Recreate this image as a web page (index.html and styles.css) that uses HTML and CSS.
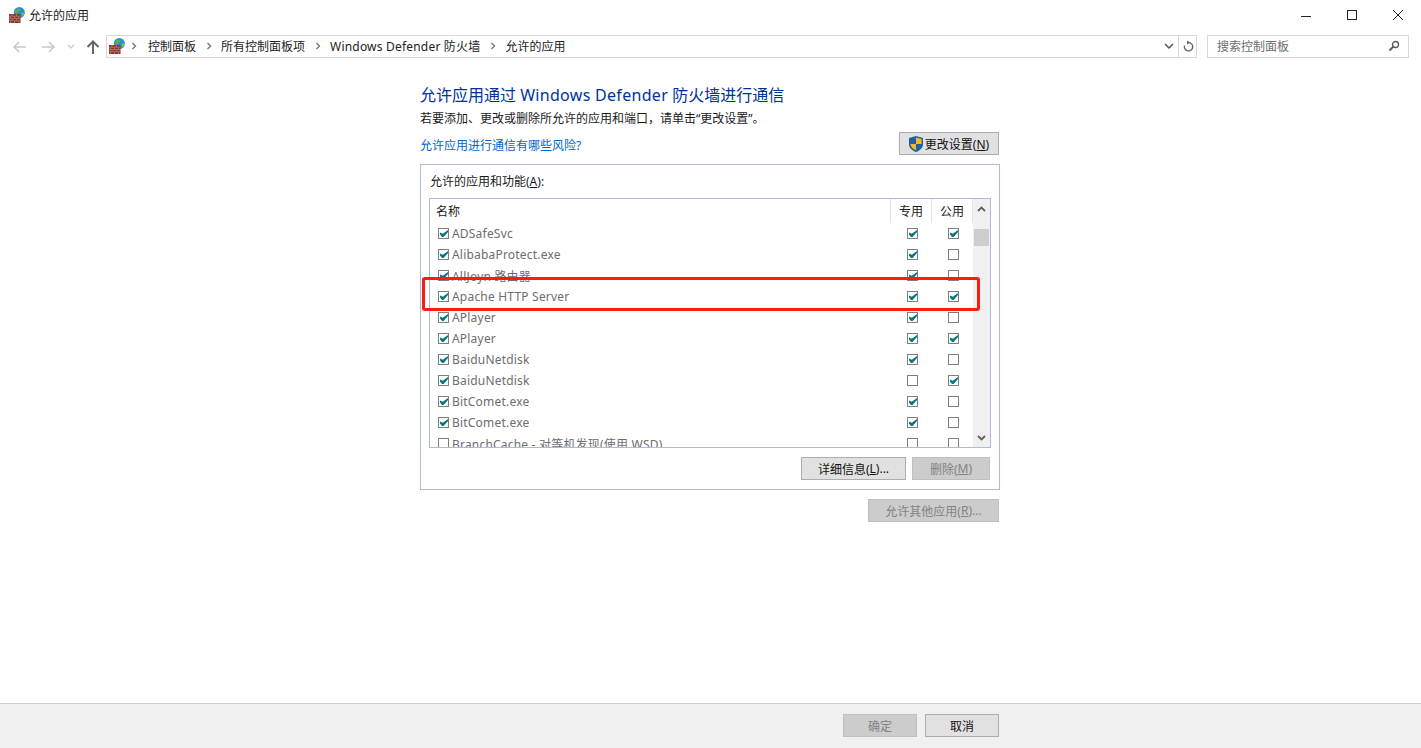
FILE: index.html
```html
<!DOCTYPE html>
<html lang="zh-CN">
<head>
  <meta charset="UTF-8" />
  <title>允许的应用</title>
  <link rel="stylesheet" href="styles.css">
</head>
<body>
  <svg class="defs" width="0" height="0">
    <symbol id="fw" viewBox="0 0 16 16">
      <circle cx="10.300" cy="5.500" r="5.500" fill="#2a8fd8"/>
      <path d="M7 2.500c2-1.500 4-1.300 5 0-.5 1.500-2 1-2.500 2.500S7.500 6 6.500 6C6 5 6.300 3.500 7 2.500z" fill="#5fb03c"/>
      <path d="M12.500 6c1-.4 2-.5 2.800-.2-.2 1.700-1 3-2.300 3.700z" fill="#7cc04a"/>
      <rect x="0" y="7" width="11.500" height="9" fill="#86352a"/>
      <path d="M0 9.200h11.500M0 11.500h11.500M0 13.700h11.500M3 7v2.200M7.500 7v2.200M1.500 9.200v2.300M5.500 9.200v2.300M9.500 9.200v2.300M3 11.500v2.200M7.500 11.500v2.200M1.500 13.700V16M5.500 13.700V16M9.500 13.700V16" stroke="#c08472" stroke-width=".7" fill="none"/>
    </symbol>
    <symbol id="crumb" viewBox="0 0 8 8">
      <path d="M2.500 1l3 3-3 3" stroke="#777" stroke-width="1.400" fill="none"/>
    </symbol>
  </svg>

  <div class="titlebar">
    <svg class="ico16"><use href="#fw"/></svg>
    <span class="title">允许的应用</span>
    <div class="winbtns">
      <span class="winbtn"><svg width="12" height="12"><path d="M1 7.500h10" stroke="#222"/></svg></span>
      <span class="winbtn"><svg width="12" height="12"><rect x="1.500" y="1.500" width="9" height="9" fill="none" stroke="#222"/></svg></span>
      <span class="winbtn"><svg width="12" height="12"><path d="M1 1l10 10M11 1L1 11" stroke="#222"/></svg></span>
    </div>
  </div>

  <div class="navbar">
    <div class="navbtns">
      <svg class="nav-back" width="14" height="12"><path d="M7 1L2 6l5 5M2 6h12" stroke="#c9c9c9" stroke-width="1.500" fill="none"/></svg>
      <svg class="nav-fwd" width="14" height="12"><path d="M7 1l5 5-5 5M12 6H0" stroke="#c9c9c9" stroke-width="1.500" fill="none"/></svg>
      <svg class="nav-down" width="8" height="6"><path d="M1 1l3 3 3-3" stroke="#c9c9c9" stroke-width="1.200" fill="none"/></svg>
      <svg class="nav-up" width="14" height="14"><path d="M1.500 7L7 1.500 12.500 7M7 2v12" stroke="#666" stroke-width="2" fill="none"/></svg>
    </div>
    <div class="address">
      <svg class="ico16"><use href="#fw"/></svg>
      <svg class="sep first"><use href="#crumb"/></svg>
      <span>控制面板</span>
      <svg class="sep"><use href="#crumb"/></svg>
      <span>所有控制面板项</span>
      <svg class="sep"><use href="#crumb"/></svg>
      <span class="crumb-wide">Windows Defender 防火墙</span>
      <svg class="sep"><use href="#crumb"/></svg>
      <span>允许的应用</span>
      <div class="addr-tools">
        <svg class="addr-drop" width="10" height="7"><path d="M1 1l4 4 4-4" stroke="#555" stroke-width="1.500" fill="none"/></svg>
        <span class="addr-refresh">
          <svg width="12" height="13"><path d="M6.500 2.500A4.200 4.200 0 1 1 2.500 5.500" stroke="#666" stroke-width="1.400" fill="none"/><path d="M5 .5l3 2-3 2z" fill="#666"/></svg>
        </span>
      </div>
    </div>
    <div class="search">
      <span>搜索控制面板</span>
      <svg width="12" height="12"><circle cx="7.500" cy="4.500" r="3" fill="none" stroke="#555" stroke-width="1.300"/><path d="M5.300 6.700L1.500 10.500" stroke="#555" stroke-width="1.800"/></svg>
    </div>
  </div>

  <div class="content">
    <h1>允许应用通过 <span class="h1-latin">Windows Defender</span> 防火墙进行通信</h1>
    <p class="intro">若要添加、更改或删除所允许的应用和端口，请单击“更改设置”。</p>
    <div class="linkrow">
      <a class="risk">允许应用进行通信有哪些风险?</a>
      <button class="btn btn-settings">
        <svg width="14" height="16" viewBox="0 0 14 16">
          <path d="M7 0l7 2v6c0 4-3 6.500-7 8-4-1.500-7-4-7-8V2z" fill="#1f5fa8"/>
          <path d="M7 1.500V8h5.600V3zM7 8v6.300C4 13 1.700 11 1.400 8z" fill="#f5b81f"/>
        </svg>
        <span>更改设置(<u>N</u>)</span>
      </button>
    </div>

    <div class="group">
      <div class="group-label">允许的应用和功能(<u>A</u>):</div>
      <div class="list">
        <div class="list-main">
          <div class="list-head">
            <span class="col-name">名称</span>
            <span class="col">专用</span>
            <span class="col">公用</span>
          </div>
          <div class="row"><span class="col-name"><i class="cb on"></i>ADSafeSvc</span><span class="col"><i class="cb on"></i></span><span class="col"><i class="cb on"></i></span></div>
          <div class="row"><span class="col-name"><i class="cb on"></i>AlibabaProtect.exe</span><span class="col"><i class="cb on"></i></span><span class="col"><i class="cb"></i></span></div>
          <div class="row"><span class="col-name"><i class="cb on"></i>AllJoyn 路由器</span><span class="col"><i class="cb on"></i></span><span class="col"><i class="cb"></i></span></div>
          <div class="row"><span class="col-name"><i class="cb on"></i>Apache HTTP Server</span><span class="col"><i class="cb on"></i></span><span class="col"><i class="cb on"></i></span></div>
          <div class="row"><span class="col-name"><i class="cb on"></i>APlayer</span><span class="col"><i class="cb on"></i></span><span class="col"><i class="cb"></i></span></div>
          <div class="row"><span class="col-name"><i class="cb on"></i>APlayer</span><span class="col"><i class="cb on"></i></span><span class="col"><i class="cb on"></i></span></div>
          <div class="row"><span class="col-name"><i class="cb on"></i>BaiduNetdisk</span><span class="col"><i class="cb on"></i></span><span class="col"><i class="cb"></i></span></div>
          <div class="row"><span class="col-name"><i class="cb on"></i>BaiduNetdisk</span><span class="col"><i class="cb"></i></span><span class="col"><i class="cb on"></i></span></div>
          <div class="row"><span class="col-name"><i class="cb on"></i>BitComet.exe</span><span class="col"><i class="cb on"></i></span><span class="col"><i class="cb"></i></span></div>
          <div class="row"><span class="col-name"><i class="cb on"></i>BitComet.exe</span><span class="col"><i class="cb on"></i></span><span class="col"><i class="cb"></i></span></div>
          <div class="row"><span class="col-name"><i class="cb"></i>BranchCache - 对等机发现(使用 WSD)</span><span class="col"><i class="cb"></i></span><span class="col"><i class="cb"></i></span></div>
        </div>
        <div class="scrollbar">
          <svg width="9" height="6"><path d="M1 5l3.500-3.500L8 5" stroke="#606060" stroke-width="1.800" fill="none"/></svg>
          <div class="thumb"></div>
          <svg class="arrow-down" width="9" height="6"><path d="M1 1l3.500 3.500L8 1" stroke="#606060" stroke-width="1.800" fill="none"/></svg>
        </div>
      </div>
      <div class="group-btns">
        <button class="btn btn-detail">详细信息(<u>L</u>)...</button>
        <button class="btn btn-delete" disabled>删除(<u>M</u>)</button>
      </div>
      <div class="highlight"></div>
    </div>

    <div class="other-row">
      <button class="btn btn-other" disabled>允许其他应用(<u>R</u>)...</button>
    </div>
  </div>

  <div class="footer">
    <button class="btn btn-ok" disabled>确定</button>
    <button class="btn btn-ok">取消</button>
  </div>
</body>
</html>
```

FILE: styles.css
```css
* {
  box-sizing: border-box;
}
html, body {
  height: 100%;
}
body {
  margin: 0;
  background: #fff;
  color: #1a1a1a;
  font-family: "Noto Sans", "Noto Sans CJK SC", sans-serif;
  font-size: 12px;
  display: flex;
  flex-direction: column;
  overflow: hidden;
}
.defs {
  position: absolute;
}
.ico16 {
  width: 16px;
  height: 16px;
  flex: none;
}

/* title bar */
.titlebar {
  height: 30px;
  display: flex;
  align-items: center;
  padding-left: 9px;
}
.title {
  margin-left: 4px;
}
.winbtns {
  margin-left: auto;
  display: flex;
}
.winbtn {
  width: 46px;
  height: 30px;
  display: flex;
  align-items: center;
  justify-content: center;
}

/* address row */
.navbar {
  height: 28px;
  display: flex;
  align-items: flex-start;
  padding-top: 5px;
}
.navbtns {
  width: 106px;
  height: 23px;
  display: flex;
  align-items: center;
  flex: none;
}
.nav-back {
  margin-left: 12px;
}
.nav-fwd {
  margin-left: 16px;
}
.nav-down {
  margin-left: 11px;
}
.nav-up {
  margin-left: 11px;
}
.address {
  width: 1091px;
  height: 23px;
  border: 1px solid #d9d9d9;
  display: flex;
  align-items: center;
  padding: 0 0 2px 2px;
  color: #222;
}
.crumb-wide {
  letter-spacing: .2px;
}
.sep {
  width: 8px;
  height: 8px;
  margin: 0 8.500px;
  flex: none;
}
.sep.first {
  margin: 0 10px 0 5px;
}
.addr-tools {
  margin-left: auto;
  display: flex;
  align-items: center;
  height: 21px;
  margin-bottom: -2px;
}
.addr-drop {
  margin-right: 2px;
}
.addr-refresh {
  width: 18px;
  height: 100%;
  margin-left: 2px;
  border-left: 1px solid #d9d9d9;
  display: flex;
  align-items: center;
  justify-content: center;
}
.search {
  width: 202px;
  height: 23px;
  margin-left: 10px;
  border: 1px solid #d9d9d9;
  display: flex;
  align-items: center;
  justify-content: space-between;
  padding: 0 8px 2px 9px;
  color: #6d6d6d;
}

/* main panel */
.content {
  flex: 1;
  width: 580px;
  margin-left: 420px;
  padding-top: 26px;
}
h1 {
  margin: 0;
  font-size: 16px;
  font-weight: 400;
  line-height: 22px;
  color: #003399;
}
.h1-latin {
  letter-spacing: .3px;
}
.intro {
  margin: 4px 0 0;
  line-height: 18px;
}
.linkrow {
  display: flex;
  align-items: center;
  justify-content: space-between;
  padding-right: 1px;
  margin-top: 4px;
  height: 23px;
}
.risk {
  color: #0066cc;
  padding-top: 2px;
}
.btn {
  font: inherit;
  height: 23px;
  padding: 0;
  background: #e1e1e1;
  border: 1px solid #adadad;
  color: #111;
  display: inline-flex;
  align-items: center;
  justify-content: center;
}
.btn:disabled {
  background: #cccccc;
  border-color: #bfbfbf;
  color: #838383;
}
.btn-settings {
  width: 100px;
  gap: 2px;
}

/* group box with list */
.group {
  position: relative;
  height: 326px;
  margin-top: 9px;
  border: 1px solid #b4b7dc;
  padding: 8px 8px 0;
}
.group-label {
  line-height: 17px;
  height: 25px;
  padding-left: 1px;
}
.list {
  width: 562px;
  height: 250px;
  border: 1px solid #b4b7dc;
  display: flex;
  overflow: hidden;
}
.list-main {
  flex: 1;
  min-width: 0;
}
.list-head {
  height: 24px;
  display: flex;
  align-items: center;
}
.list-head .col-name {
  padding-left: 6px;
}
.list-head .col {
  height: 100%;
  border-left: 1px solid #e5e5e5;
}
.list-head .col:last-child {
  width: 42px;
  border-right: 1px solid #e5e5e5;
}
.row {
  height: 21px;
  display: flex;
  align-items: center;
  color: #6d6d6d;
  letter-spacing: .2px;
}
.row .col {
  padding-left: 2px;
}
.col-name {
  flex: 1;
  display: flex;
  align-items: center;
  padding-left: 8px;
  white-space: nowrap;
}
.col {
  width: 41px;
  flex: none;
  display: flex;
  align-items: center;
  justify-content: center;
}
.list-head .col-name, .list-head .col {
  color: #1a1a1a;
}
.cb {
  position: relative;
  width: 11px;
  height: 11px;
  flex: none;
  border: 1px solid #7f7f7f;
  background: #fff;
}
.col-name .cb {
  margin-right: 3px;
}
.cb.on::after {
  content: "";
  position: absolute;
  left: 1px;
  top: 1px;
  width: 8px;
  height: 7px;
  background: #00787f;
  clip-path: polygon(0 35%, 35% 55%, 100% 0, 100% 30%, 45% 100%, 25% 100%, 0 65%);
}
.scrollbar {
  width: 17px;
  flex: none;
  background: #f0f0f0;
  display: flex;
  flex-direction: column;
  align-items: center;
  padding-top: 7px;
}
.thumb {
  width: 15px;
  height: 17px;
  margin-top: 17px;
  background: #cdcdcd;
}
.arrow-down {
  margin-top: auto;
  margin-bottom: 6px;
}
.group-btns {
  display: flex;
  justify-content: flex-end;
  gap: 6px;
  margin-top: 9px;
  padding-right: 1px;
}
.btn-detail {
  width: 105px;
}
.btn-delete {
  width: 78px;
}
.highlight {
  position: absolute;
  left: 1px;
  top: 112px;
  width: 558px;
  height: 34px;
  border: 3px solid #ff1a12;
  border-radius: 3px;
  pointer-events: none;
}
.other-row {
  display: flex;
  justify-content: flex-end;
  padding-right: 1px;
  margin-top: 9px;
}
.btn-other {
  width: 131px;
}

/* bottom bar */
.footer {
  height: 45px;
  background: #f0f0f0;
  border-top: 1px solid #cccccc;
  display: flex;
  justify-content: flex-end;
  gap: 8px;
  padding: 10px 422px 0 0;
}
.btn-ok {
  width: 74px;
}
```
